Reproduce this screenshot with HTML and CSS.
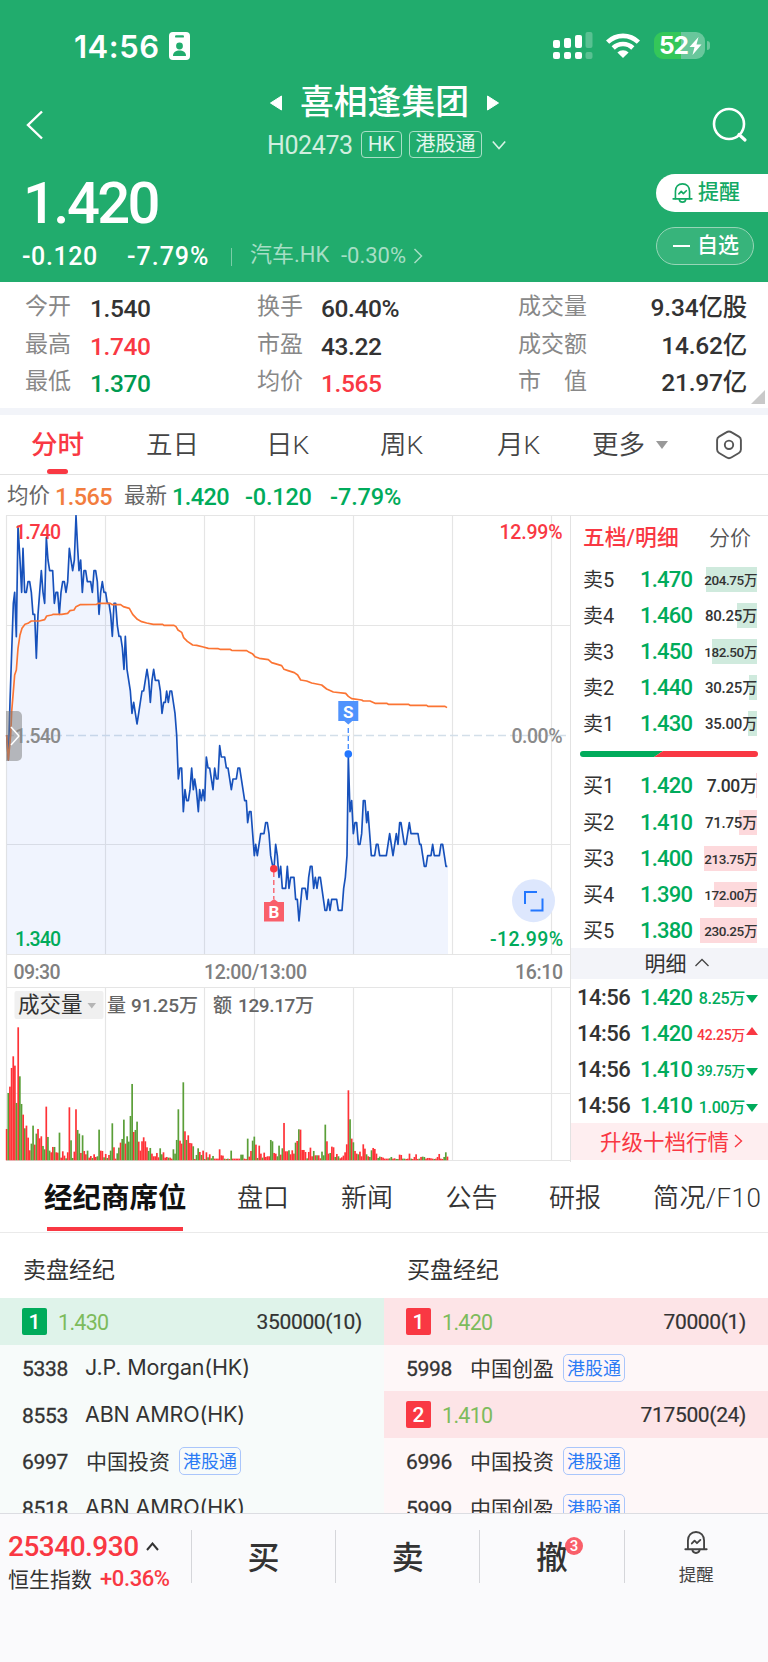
FILE: index.html
```html
<!DOCTYPE html>
<html lang="zh-CN">
<head>
<meta charset="utf-8">
<title>喜相逢集团 H02473</title>
<link rel="stylesheet" href="styles.css">
</head>
<body>
<svg class="defs" width="0" height="0">
  <symbol id="bell" viewBox="0 0 22 22">
    <g fill="none" stroke="currentColor" stroke-width="1.7" stroke-linejoin="round" stroke-linecap="round">
      <path d="M3.6 17V9.2C3.6 4.6 6.6 1.4 11 1.4s7.4 3.2 7.4 7.8V17"/>
      <path d="M1.2 17.2h19.6"/>
      <path d="M7.6 17.6c.5 4 6.3 4 6.8 0"/>
      <path d="M7.2 11.9l2.5-2.6 2.2 2.3 3.1-3"/>
    </g>
  </symbol>
</svg>

<header class="head">
  <div class="status">
    <span class="clock">14:56</span>
    <svg class="idcard" width="21" height="28" viewBox="0 0 21 28"><rect width="21" height="28" rx="4" fill="#fff"/><rect x="6" y="3.2" width="9" height="2.4" rx="1.2" fill="#21ac6d"/><circle cx="10.500" cy="14" r="3.4" fill="#21ac6d"/><path d="M4 24c0-4 3-5.500 6.500-5.500S17 20 17 24z" fill="#21ac6d"/></svg>
    <svg class="signal" width="40" height="28" viewBox="0 0 40 28"><g fill="#fff"><rect x="0" y="8" width="7" height="8" rx="2"/><rect x="11" y="6" width="7" height="10" rx="2"/><rect x="22" y="3" width="7" height="13" rx="2"/><rect x="0" y="20" width="7" height="7" rx="2"/><rect x="11" y="20" width="7" height="7" rx="2"/><rect x="22" y="20" width="7" height="7" rx="2"/><g opacity=".25"><rect x="32.500" y="0" width="7" height="16" rx="2"/><rect x="32.500" y="20" width="7" height="7" rx="2"/></g></g></svg>
    <svg class="wifi" width="34" height="25" viewBox="0 0 34 25"><g fill="none" stroke="#fff" stroke-width="4.600"><path d="M1.600 9.200a22 22 0 0 1 30.800 0"/><path d="M7.200 15a14 14 0 0 1 19.600 0"/></g><path d="M17 25l-5.600-5.400a8 8 0 0 1 11.200 0z" fill="#fff"/></svg>
    <div class="battery"><span>52</span><svg width="13" height="18" viewBox="0 0 12 18"><path d="M9 0L0 10h5L3 18l9-10.500H7z" fill="#fff"/></svg></div>
    <i class="nub"></i>
  </div>

  <div class="title-area">
    <svg class="back" width="18" height="30" viewBox="0 0 18 30"><path d="M16 1.500L2 15l14 13.500" fill="none" stroke="#fff" stroke-width="2.400"/></svg>
    <div class="title-mid">
      <div class="title-row">
        <svg width="12" height="16" viewBox="0 0 12 16"><path d="M11.500 1v14L0.500 8z" fill="#fff" stroke="#fff" stroke-linejoin="round"/></svg>
        <h1>喜相逢集团</h1>
        <svg width="12" height="16" viewBox="0 0 12 16"><path d="M.5 1v14l11-7z" fill="#fff" stroke="#fff" stroke-linejoin="round"/></svg>
      </div>
      <div class="code-row">
        <span class="code">H02473</span><span class="box hk">HK</span><span class="box ggt">港股通</span>
        <svg width="14" height="10" viewBox="0 0 14 10"><path d="M.8 1.500L7 8.500l6.200-7" fill="none" stroke="#d8f2e6" stroke-width="1.600"/></svg>
      </div>
    </div>
    <svg class="search" width="36" height="36" viewBox="0 0 36 36"><g fill="none" stroke="#fff"><circle cx="17" cy="17" r="15" stroke-width="2.600"/><path d="M27 27.500l6 5.500" stroke-width="3.200" stroke-linecap="round"/></g></svg>
  </div>

  <div class="quote">
    <div class="quote-left">
      <div class="last">1.420</div>
      <div class="change"><span class="c1">-0.120</span><span class="c2">-7.79%</span><i></i><span class="c3">汽车.HK</span><span class="c4">-0.30%</span>
        <svg width="10" height="16" viewBox="0 0 10 16"><path d="M1.500 1l7 7-7 7" fill="none" stroke="#a6dec5" stroke-width="1.500"/></svg></div>
    </div>
    <div class="pills">
      <div class="pill solid"><svg width="21" height="22"><use href="#bell"/></svg><span>提醒</span></div>
      <div class="pill line"><i></i><span>自选</span></div>
    </div>
  </div>
</header>

<section class="stats">
  <span>今开</span><b>1.540</b><span>换手</span><b>60.40%</b><span>成交量</span><b class="r">9.34亿股</b>
  <span>最高</span><b class="up">1.740</b><span>市盈</span><b>43.22</b><span>成交额</span><b class="r">14.62亿</b>
  <span>最低</span><b class="down">1.370</b><span>均价</span><b class="up">1.565</b><span class="spread">市<em>值</em></span><b class="r">21.97亿</b>
  <i class="corner"></i>
</section>

<nav class="periods">
  <span class="on">分时</span><span>五日</span><span>日K</span><span>周K</span><span>月K</span><span>更多<i></i></span>
  <svg width="28" height="30" viewBox="0 0 28 30"><g fill="none" stroke="#555" stroke-width="1.900" stroke-linejoin="round"><path d="M11.300 2.400a5 5 0 0 1 5.400 0l7.200 4.200a4 4 0 0 1 2 3.400v9.600a4 4 0 0 1-2 3.400l-7.200 4.300a5 5 0 0 1-5.400 0L4.100 23a4 4 0 0 1-2-3.400V10a4 4 0 0 1 2-3.400z"/><circle cx="14" cy="14.800" r="4.200"/></g></svg>
</nav>

<div class="info"><span>均价</span><b class="avg">1.565</b><span>最新</span><b>1.420</b><b>-0.120</b><b>-7.79%</b></div>

<main class="market">
  <svg class="chart" width="570" height="647" viewBox="0 515 570 647">
    <g stroke="#e5e5e5" stroke-width="1.200" fill="none">
      <path d="M6.500 515.500V1160.500M6 515.500h564M6 625.500h564M6 844.500h564M6 954.500h564M6 987.500h564M6 1093.500h564M6 1160.500h564"/>
      <path d="M105.500 515v439M204.500 515v439M254.500 515v439M353.500 515v439M452.500 515v439M551.500 515v439M105.500 987v173M204.500 987v173M254.500 987v173M353.500 987v173M452.500 987v173M551.500 987v173"/>
    </g>
    <path d="M6 735.500h564" stroke="#d3dfe9" stroke-width="1.300" stroke-dasharray="8 4"/>
    <g transform="translate(0 505) scale(.33333)" stroke-linejoin="round" fill="none">
      <path id="area" fill="#3b6df0" fill-opacity=".08"/>
      <polyline id="price" stroke="#1751bb" stroke-width="5" points="20,690 25,765 30,590 40,295 44,262 49,395 54,64 60,165 65,262 69,130 74,262 79,262 84,230 89,230 94,262 99,328 104,328 109,460 114,328 119,262 124,197 129,262 134,295 139,98 144,165 149,197 158,197 163,295 168,262 173,262 178,328 183,262 188,230 193,230 198,262 203,230 208,130 213,165 218,197 223,165 228,32 233,130 237,197 242,165 247,262 252,197 257,197 262,230 272,230 277,262 282,197 287,197 292,230 297,328 302,262 307,230 312,262 317,262 322,295 327,295 332,328 337,394 342,295 347,295 352,361 357,394 362,394 367,428 372,493 376,394 381,493 391,558 396,625 401,592 411,657 416,625 426,558 431,558 441,493 446,526 451,592 456,526 461,493 466,526 476,526 481,558 486,625 491,592 496,592 500,558 505,592 510,558 515,558 525,625 530,690 535,822 540,789 545,789 550,920 555,854 560,887 565,887 570,854 575,789 580,854 584,822 589,854 595,920 599,854 604,887 609,854 614,887 619,756 624,789 629,789 639,854 644,789 649,822 654,822 659,722 664,756 674,756 679,789 684,789 694,854 699,822 709,822 714,789 719,789 734,887 739,887 743,953 748,920 753,920 763,1052 767,1018 772,1052 782,986 792,986 797,953 802,953 807,986 812,1052 817,1078 822,1090 827,1018 832,1052 837,1117 842,1084 847,1150 857,1150 862,1084 867,1150 872,1117 882,1117 887,1183 892,1183 897,1248 906,1150 916,1150 921,1183 926,1117 931,1084 936,1084 941,1150 946,1117 951,1150 956,1117 961,1117 975,1216 980,1216 985,1183 990,1216 995,1183 1010,1183 1015,1216 1026,1216 1031,1150 1036,1117 1041,1052 1045,755 1050,920 1055,887 1060,986 1065,953 1070,953 1075,1018 1080,1018 1085,986 1090,887 1095,887 1100,953 1104,920 1114,1052 1124,1052 1129,1018 1134,1018 1139,1052 1159,1052 1169,986 1179,1052 1189,986 1194,1018 1199,953 1203,953 1213,1018 1218,1018 1228,953 1233,986 1254,986 1259,1018 1263,1018 1273,1084 1278,1084 1283,1052 1293,1052 1298,1018 1303,1052 1318,1052 1323,1018 1328,1018 1338,1084 1342,1084"/>
      <polyline stroke="#fb7433" stroke-width="5" points="20,690 25,765 32,690 35,620 40,560 44,510 49,495 54,430 60,390 66,370 75,358 84,355 94,348 118,348 134,344 140,333 155,330 160,328 185,328 203,325 210,317 222,315 228,305 240,299 290,298 295,295 330,295 337,299 362,299 370,305 388,310 398,328 412,343 425,350 440,354 460,358 488,358 492,361 522,361 528,365 534,375 545,382 551,398 562,409 578,420 590,421 610,426 625,430 655,431 660,433 690,433 695,436 740,437 748,442 757,446 765,455 778,460 805,464 815,473 845,482 852,493 864,497 883,503 893,510 902,525 920,528 935,534 965,540 980,552 1000,561 1037,565 1045,574 1055,581 1085,585 1090,588 1110,588 1125,595 1160,595 1165,598 1225,598 1230,601 1280,601 1284,604 1335,604 1341,608"/>
    </g>
    <g id="volume" transform="translate(0 1160.300)"></g>
    <path d="M6 711h11a5 5 0 0 1 5 5v40a5 5 0 0 1-5 5H6z" fill="#777" fill-opacity=".5"/>
    <path d="M11 727l8 9-8 9" fill="none" stroke="#fff" stroke-width="1.500"/>
    <g class="axis">
      <text x="15" y="538.500" fill="#f93843" textLength="46">1.740</text>
      <text x="15" y="742.500" fill="#8b8b8b" textLength="46">1.540</text>
      <text x="15" y="946" fill="#00ab5b" textLength="46">1.340</text>
      <text x="499.500" y="538.500" fill="#f93843" textLength="63">12.99%</text>
      <text x="511.500" y="742.500" fill="#8b8b8b" textLength="51">0.00%</text>
      <text x="490" y="946" fill="#00ab5b" textLength="73">-12.99%</text>
      <text x="13.500" y="978.500" fill="#808080" textLength="47">09:30</text>
      <text x="204" y="978.500" fill="#808080" textLength="103">12:00/13:00</text>
      <text x="515" y="978.500" fill="#808080" textLength="48">16:10</text>
    </g>
    <path d="M273.800 872v27" stroke="#f8636d" stroke-width="1.400" stroke-dasharray="5 3"/>
    <circle cx="273.800" cy="868.700" r="3.800" fill="#f93843"/>
    <path d="M264 902h6l4-3 4 3h6v19.500h-20z" fill="#f95f6a"/>
    <path d="M348.300 728v22" stroke="#4a90ff" stroke-width="1.400" stroke-dasharray="5 3"/>
    <circle cx="348.300" cy="754" r="3.800" fill="#2377ff"/>
    <path d="M338.300 701h20v20h-6l-4 3.500-4-3.500h-6z" fill="#5093fd"/>
    <text class="mark" x="274" y="918">B</text><text class="mark" x="348.300" y="717.500">S</text>
    <circle cx="533.500" cy="900.700" r="21.500" fill="#dde7fd"/>
    <path d="M525 904v-12h12M542.500 898.500v12h-12" fill="none" stroke="#2377ff" stroke-width="2"/>
    <rect x="14.500" y="991" width="89" height="28" rx="2" fill="#f0f0f0"/>
    <text x="18" y="1011.500" font-size="21.500" fill="#333" textLength="64.500">成交量</text>
    <path d="M87.500 1003h8.500l-4.200 5.500z" fill="#b5b5b5"/>
    <g class="vol" fill="#666"><text x="107" y="1011.500">量</text><text x="131" y="1011.500" textLength="67">91.25万</text><text x="213" y="1011.500">额</text><text x="238" y="1011.500" textLength="76">129.17万</text></g>
  </svg>

  <aside class="book">
    <div class="book-tabs"><b>五档/明细</b><span>分价</span></div>
    <div class="lv sell"><span>卖5</span><b>1.470</b><em class="s"><i style="width:51px"></i>204.75万</em></div>
    <div class="lv sell"><span>卖4</span><b>1.460</b><em class="m"><i style="width:20px"></i>80.25万</em></div>
    <div class="lv sell"><span>卖3</span><b>1.450</b><em class="s"><i style="width:45px"></i>182.50万</em></div>
    <div class="lv sell"><span>卖2</span><b>1.440</b><em class="m"><i style="width:8px"></i>30.25万</em></div>
    <div class="lv sell"><span>卖1</span><b>1.430</b><em class="m"><i style="width:9px"></i>35.00万</em></div>
    <svg class="ratio" width="178" height="6" viewBox="0 0 178 6"><path d="M3 0H83L74 6H3a3 3 0 0 1 0-6z" fill="#00ab5b"/><path d="M83 0h92a3 3 0 0 1 0 6H74z" fill="#f93843"/></svg>
    <div class="lv buy"><span>买1</span><b>1.420</b><em class="l"><i style="width:1.500px"></i>7.00万</em></div>
    <div class="lv buy"><span>买2</span><b>1.410</b><em class="m"><i style="width:18px"></i>71.75万</em></div>
    <div class="lv buy"><span>买3</span><b>1.400</b><em class="s"><i style="width:53px"></i>213.75万</em></div>
    <div class="lv buy"><span>买4</span><b>1.390</b><em class="s"><i style="width:43px"></i>172.00万</em></div>
    <div class="lv buy"><span>买5</span><b>1.380</b><em class="s"><i style="width:57px"></i>230.25万</em></div>
    <div class="book-mid">明细<svg width="14" height="9" viewBox="0 0 14 9"><path d="M.5 8L7 1.500 13.500 8" fill="none" stroke="#444" stroke-width="1.300"/></svg></div>
    <div class="tick dn"><span>14:56</span><b>1.420</b><em class="t1">8.25万</em><i></i></div>
    <div class="tick rise"><span>14:56</span><b>1.420</b><em>42.25万</em><i></i></div>
    <div class="tick dn"><span>14:56</span><b>1.410</b><em>39.75万</em><i></i></div>
    <div class="tick dn"><span>14:56</span><b>1.410</b><em class="t1">1.00万</em><i></i></div>
    <div class="upgrade">升级十档行情<svg width="9" height="14" viewBox="0 0 9 14"><path d="M1 1l6.500 6L1 13" fill="none" stroke="#f93843" stroke-width="1.400"/></svg></div>
  </aside>
</main>

<nav class="sections">
  <span class="on">经纪商席位</span><span>盘口</span><span>新闻</span><span>公告</span><span>研报</span><span>简况/F10</span>
</nav>

<section class="brokers">
  <div class="side ask">
    <h2>卖盘经纪</h2>
    <div class="rank"><i>1</i><b>1.430</b><span>350000(10)</span></div>
    <div class="row"><b>5338</b><span class="en">J.P. Morgan(HK)</span></div>
    <div class="row"><b>8553</b><span class="en">ABN AMRO(HK)</span></div>
    <div class="row"><b>6997</b><span>中国投资</span><em>港股通</em></div>
    <div class="row"><b>8518</b><span class="en">ABN AMRO(HK)</span></div>
  </div>
  <div class="side bid">
    <h2>买盘经纪</h2>
    <div class="rank"><i>1</i><b>1.420</b><span>70000(1)</span></div>
    <div class="row"><b>5998</b><span>中国创盈</span><em>港股通</em></div>
    <div class="rank"><i>2</i><b>1.410</b><span>717500(24)</span></div>
    <div class="row"><b>6996</b><span>中国投资</span><em>港股通</em></div>
    <div class="row"><b>5999</b><span>中国创盈</span><em>港股通</em></div>
  </div>
</section>

<footer class="dock">
  <div class="index"><div class="idx"><b>25340.930</b><svg width="13" height="9" viewBox="0 0 13 9"><path d="M1 8l5.500-6.500L12 8" fill="none" stroke="#333" stroke-width="2"/></svg></div><div class="idx2"><span>恒生指数</span><b>+0.36%</b></div></div>
  <div class="act">买</div>
  <div class="act">卖</div>
  <div class="act"><span>撤<i>3</i></span></div>
  <div class="act remind"><svg width="24" height="25" viewBox="0 0 22 22"><use href="#bell"/></svg><span>提醒</span></div>
</footer>
<script src="chart.js"></script>
</body>
</html>
```
FILE: styles.css
```css
* { box-sizing: border-box; margin: 0; padding: 0; }
body { width: 768px; height: 1662px; overflow: hidden; background: #fff; color: #333; font-family: Roboto, "Noto Sans CJK SC", sans-serif; display: flex; flex-direction: column; }
i, em { font-style: normal; }
b { font-weight: 500; }
svg { display: block; flex: none; }
.defs { position: absolute; }
.up { color: #f93843 !important; }
.down { color: #009a50 !important; }

.head { height: 282px; flex: none; background: #21ac6d; color: #fff; }
.status { display: flex; align-items: flex-start; height: 78px; padding: 32px 0 0 74px; }
.clock { width: 95px; font: 600 31px/29px Inter, sans-serif; letter-spacing: .5px; }
.signal { margin-left: 363px; }
.wifi { margin-left: 13px; margin-top: 1px; }
.battery { display: flex; align-items: center; width: 51px; height: 27px; margin-left: 14px; padding-left: 5px; border-radius: 9px; background: linear-gradient(90deg, #34c759 52%, #69c79c 52%); font: 700 24.500px/27px Inter, sans-serif; }
.battery span { letter-spacing: -1.2px; }
.battery svg { margin-left: 1px; }
.nub { width: 3px; height: 9px; margin: 9px 0 0 2px; border-radius: 0 3px 3px 0; background: #69c79c; }

.title-area { display: flex; height: 90px; }
.back { margin: 32px 0 0 26px; }
.title-mid { width: 260px; margin-left: 218px; }
.title-row { display: flex; align-items: center; height: 50px; padding-left: 8px; }
.title-row h1 { width: 168px; margin: 0 19px 0 18px; font-size: 33.8px; line-height: 40px; font-weight: 500; white-space: nowrap; }
.code-row { display: flex; align-items: center; height: 33px; }
.code { width: 99px; padding-left: 5px; font-size: 25px; letter-spacing: -.4px; color: #d0eedf; padding-top: 2px; }
.box { height: 27px; border: 1.500px solid #a9dfc7; border-radius: 4px; font-size: 20px; line-height: 25px; text-align: center; color: #e3f6ed; }
.hk { width: 41px; }
.ggt { width: 73px; margin: 0 10px 0 7px; }
.search { margin: 29px 0 0 190px; }

.quote { display: flex; justify-content: space-between; }
.last { height: 70px; padding-left: 23px; font-weight: 500; font-size: 58px; line-height: 70px; letter-spacing: -2.6px; }
.change { display: flex; align-items: center; height: 36px; padding: 1px 0 0 22px; font-size: 25px; font-weight: 500; }
.c1 { width: 105px; letter-spacing: .6px; }
.c2 { width: 104px; letter-spacing: 1px; }
.change i { width: 1px; height: 18px; background: #7acda7; }
.c3 { width: 91px; margin: 0 0 4px 18px; font-size: 22px; line-height: 32px; font-weight: 400; color: #a6dec5; }
.c4 { width: 72px; margin-bottom: 2px; font-size: 22px; font-weight: 400; color: #a6dec5; }
.change svg { margin-bottom: 1px; }
.pills { width: 112px; padding-top: 6px; }
.pill { display: flex; align-items: center; height: 38px; font-size: 21px; font-weight: 500; }
.pill span { line-height: 34px; margin-bottom: 2px; }
.solid { padding-left: 16px; gap: 5px; border-radius: 19px 0 0 19px; background: #fff; color: #12a964; }
.line { width: 98px; margin-top: 15px; padding-left: 16px; border: 1px solid #97d5b7; border-radius: 19px; background: #37b47b; gap: 7px; }
.line i { width: 17px; height: 2px; background: #fff; }

.stats { position: relative; flex: none; height: 133px; padding: 7px 21px 0 25px; border-bottom: 7px solid #f2f4f9; display: grid; grid-template-columns: 65px 167px 64px 197px 96px 1fr; grid-auto-rows: 37.7px; align-items: center; }
.stats span { font-size: 23px; line-height: 34px; margin-bottom: 2px; color: #888; }
.stats b { font-size: 24.5px; line-height: 34px; letter-spacing: -.4px; white-space: nowrap; padding-top: 2px; }
.stats .r { text-align: right; padding-top: 0; letter-spacing: -.2px; }
.spread em { margin-left: 23px; }
.corner { position: absolute; right: 3px; bottom: 4px; border-left: 14px solid transparent; border-bottom: 14px solid #c9c9c9; }

.periods { flex: none; height: 60px; padding: 0 0 0 31px; border-bottom: 1.500px solid #e2e2e2; display: grid; grid-template-columns: 115px 120px 114px 117px 95px 123px 30px; align-items: center; font-size: 26.500px; color: #444; }
.periods span { position: relative; height: 59px; line-height: 60px; font-weight: 350; }
.periods .on { color: #f93843; font-weight: 500; }
.periods .on::after { content: ""; position: absolute; left: 16px; bottom: 0; width: 21px; height: 5px; border-radius: 2.500px; background: #f93843; }
.periods span i { display: inline-block; margin: 0 0 5px 11px; border: 6.500px solid transparent; border-top: 8px solid #999; border-bottom: 0; vertical-align: middle; }

.info { flex: none; display: flex; align-items: center; height: 40px; padding: 1px 0 0 7px; font-size: 21.5px; color: #666; }
.info span { width: 48px; line-height: 34px; }
.info b { font-size: 23.5px; color: #00ab5b; width: 73px; letter-spacing: -.6px; padding-top: 2px; }
.info .avg { width: 69px; color: #f27d3e; }
.info b:nth-child(5) { width: 85px; letter-spacing: -.2px; }
.info b:nth-child(6) { letter-spacing: -.1px; }

.market { flex: none; display: flex; height: 647px; }
.axis { font-size: 19.500px; font-weight: 500; }
.mark { font-size: 17px; font-weight: 700; text-anchor: middle; fill: #fff; }
.vol { font-size: 19px; font-weight: 500; }
.book { width: 198px; border-left: 1.500px solid #e2e2e2; border-top: 1px solid #e5e5e5; }
.book-tabs { display: flex; height: 45.500px; padding-left: 12px; line-height: 44px; font-size: 21px; }
.book-tabs b { width: 126px; font-size: 21.8px; color: #f93843; }
.book-tabs span { color: #555; font-weight: 350; }
.lv { display: flex; height: 36.100px; padding-left: 12px; line-height: 36px; font-size: 21.500px; }
.lv span { width: 57px; font-size: 20px; }
.lv b, .tick b { width: 56px; color: #00ab5b; font-size: 22px; letter-spacing: -.8px; }
.lv em { position: relative; width: 61px; text-align: right; z-index: 0; white-space: nowrap; font-weight: 500; }
.lv em i { position: absolute; z-index: -1; right: 0; top: 5px; height: 25px; }
.sell em i { background: #cfeadd; }
.buy em i { background: #fdd9dc; }
.s { font-size: 13.500px; letter-spacing: -.4px; }
.m { font-size: 15px; letter-spacing: -.2px; }
.l { font-size: 17.500px; letter-spacing: -.4px; }
.ratio { margin: 9.500px 0 11px 9px; }
.book-mid { display: flex; align-items: center; justify-content: center; gap: 8px; height: 31px; margin-top: -1px; background: #f3f4f9; font-size: 21px; padding: 0 0 2px 14px; }
.tick { display: flex; align-items: center; height: 36.100px; padding: 1px 0 0 6px; }
.tick span { width: 63px; font-size: 22px; font-weight: 500; letter-spacing: -.5px; }
.tick em { width: 49px; text-align: right; font-size: 14px; letter-spacing: -.3px; color: #00ab5b; font-weight: 500; white-space: nowrap; }
.tick .t1 { font-size: 16px; }
.tick i { margin: 4px 0 0 1px; border: 6.500px solid transparent; border-top: 8px solid #00ab5b; border-bottom: 0; }
.tick.rise em { color: #f93843; }
.tick.rise i { border-top: 0; border-bottom: 8px solid #f93843; margin: 0 0 6px 1px; }
.upgrade { display: flex; align-items: center; height: 37px; padding: 0 0 2px 29px; gap: 5px; background: #feeef0; color: #f93843; font-size: 21.5px; }

.sections { flex: none; height: 71px; padding: 0 0 0 44px; border-bottom: 1px solid #eaeaea; display: grid; grid-template-columns: 193px 104px 104.500px 103.500px 104px 1fr; font-size: 26px; font-weight: 350; line-height: 73px; white-space: nowrap; color: #333; }
.sections span { height: 70px; }
.sections span:last-child { letter-spacing: .4px; }
.sections .on { position: relative; font-size: 28.500px; font-weight: 700; color: #111; }
.sections .on::after { content: ""; position: absolute; left: 3px; bottom: 1px; width: 136px; height: 4px; background: #f93843; }

.brokers { flex: none; display: flex; height: 280px; overflow: hidden; }
.side { width: 384px; }
.side h2 { height: 65px; padding: 0 0 0 23px; font-size: 23px; font-weight: 400; line-height: 76px; }
.rank, .row { display: flex; align-items: center; height: 46.500px; padding: 0 22px 0 22px; font-size: 21px; }
.rank i { width: 25px; height: 27px; border-radius: 2px; color: #fff; font-weight: 500; line-height: 28px; text-align: center; background: #f93843; }
.rank b { margin-left: 11px; padding-top: 2px; font-weight: 400; font-size: 21.500px; letter-spacing: -.7px; color: #7dbb5c; }
.rank span { margin-left: auto; padding-top: 2px; font-size: 21px; letter-spacing: -.35px; -webkit-text-stroke: .2px; }
.row b { width: 64px; padding: 3px 0 0 0; font-size: 21px; font-weight: 400; letter-spacing: -.3px; -webkit-text-stroke: .3px; }
.row span { margin-bottom: 1px; }
.row em { height: 28px; margin-left: 9px; padding: 0 3px; border: 1px solid #aac6fb; border-radius: 5px; color: #2b7bf5; font-size: 18px; line-height: 27px; margin-top: 1px; }
.row .en { font-family: Inter, sans-serif; font-size: 21.500px; letter-spacing: -.15px; margin: 0 0 1px -1px; }
.ask .rank { background: #dff3ea; }
.ask .rank i { background: #00ab5b; }
.ask .row { background: #f7fbfa; }
.bid .rank { background: #fde4e7; }
.bid .row { background: #fef7f8; }

.dock { flex: 1; display: flex; border-top: 1px solid #dcdde2; background: #fafafc; }
.index { width: 191px; padding: 14px 0 0 8px; }
.idx, .idx2 { display: flex; align-items: center; height: 36px; }
.idx b { font-size: 28px; color: #f93843; letter-spacing: -.5px; }
.idx svg { margin-left: 7px; }
.idx2 { height: 28px; font-size: 21px; }
.idx2 b { margin-left: 8px; font-size: 22px; letter-spacing: -.4px; color: #f93843; }
.act { width: 144.200px; height: 53px; margin-top: 16px; border-left: 1px solid #d5d6da; text-align: center; font-size: 32px; line-height: 57px; font-weight: 500; }
.act span { position: relative; }
.act span i { position: absolute; right: -15px; top: -2px; width: 18px; height: 18px; border-radius: 50%; background: #f95f6a; color: #fff; font-size: 15px; line-height: 18px; }
.remind { display: flex; flex-direction: column; align-items: center; color: #444; }
.remind span { font-size: 17.500px; line-height: 22px; margin-top: 9px; font-weight: 400; }
```
FILE: chart.js
```js
// Per-minute traded volume: r = up tick, g = down tick, followed by bar height in thirds of a pixel.
const data = `r94 g202 r221 r277 r312 r284 g172 r399 g252 g169 r137 g96 r104 r68 r30 g50 g104 r47 g80 r94
r66 r72 g43 g33 r161 g70 g29 r24 r40 g40 r24 r23 g83 r8 r27 r14 g6 r24 r159 g60
g7 r26 r153 g91 g80 r22 g75 r28 r18 g29 r8 r13 g7 r18 r10 g12 g92 r29 r28 g9
r19 g7 r16 g29 g111 r39 r5 g21 g38 r53 g64 g122 r50 g72 g56 g133 g229 r85 g91 g116
r56 r29 r57 r69 r57 r39 g28 g37 r20 r12 r12 r22 r9 g36 g18 r24 r8 r10 g8 r8
r5 g33 g20 g61 g153 r59 r50 g234 r87 g61 r75 r52 r51 g42 r4 g16 g36 r25 g16 r29
g4 r24 g9 r18 g6 g13 r5 r5 r5 r33 r15 r14 g5 r4 g5 r4 g29 r5 r5 r5
r5 r5 g17 g17 r5 r4 g65 r11 r28 g59 g71 r47 g7 r44 r20 g8 r23 r10 r12 r12
g61 g57 r22 r20 g12 g44 r17 g36 r112 r27 r27 g30 r18 r30 r20 g53 r58 g93 r92 r31
r31 r25 g6 r25 r38 r12 g28 r15 g15 r15 r6 g26 g15 g107 r57 r20 g22 r41 r39 g10
r19 g12 r6 r9 r14 r24 r48 r210 g123 r65 g54 r28 r20 g18 r26 r12 r48 r35 g18 r12
g10 g30 r37 r34 r20 g7 g11 r10 r8 r5 r5 r5 g6 g10 r5 r6 g4 g4 r17 r16
g5 g5 r4 r5 r20 g5 r4 r10 r18 r4 g5 r10 g11 g10 r5 r7 r7 r6 r5 g4
r5 r10 r19 r5 r4 g10 g24 r11`.split(/\s+/);

const ns = "http://www.w3.org/2000/svg";
const volume = document.getElementById("volume");
data.forEach((d, i) => {
  const h = Number(d.slice(1)) / 3;
  const bar = document.createElementNS(ns, "rect");
  bar.setAttribute("x", 5.8 + i * 1.651);
  bar.setAttribute("y", -h);
  bar.setAttribute("width", 1.7);
  bar.setAttribute("height", h);
  bar.setAttribute("fill", d[0] === "r" ? "#fe3237" : "#5a9f38");
  volume.appendChild(bar);
});

// Shaded area under the price line, closed at the bottom edge of the plot.
const pts = document.getElementById("price").getAttribute("points");
document.getElementById("area").setAttribute("d", "M20,1347L" + pts + "L1344,1084L1344,1347Z");
```
